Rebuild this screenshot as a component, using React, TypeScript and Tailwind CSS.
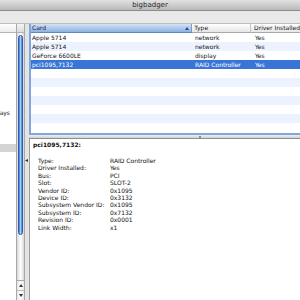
import React from 'react';

type Device = { card: string; type: string; driver: string; selected?: boolean };

const devices: Device[] = [
  { card: 'Apple 5714', type: 'network', driver: 'Yes' },
  { card: 'Apple 5714', type: 'network', driver: 'Yes' },
  { card: 'GeForce 6600LE', type: 'display', driver: 'Yes' },
  { card: 'pci1095,7132', type: 'RAID Controller', driver: 'Yes', selected: true },
];

const details: [string, string][] = [
  ['Type:', 'RAID Controller'],
  ['Driver Installed:', 'Yes'],
  ['Bus:', 'PCI'],
  ['Slot:', 'SLOT-2'],
  ['Vendor ID:', '0x1095'],
  ['Device ID:', '0x3132'],
  ['Subsystem Vendor ID:', '0x1095'],
  ['Subsystem ID:', '0x7132'],
  ['Revision ID:', '0x0001'],
  ['Link Width:', 'x1'],
];

const TOTAL_ROWS = 11;

function Row({ d, index }: { d?: Device; index: number }) {
  const stripe = index % 2 === 1 ? 'bg-[#edf3fe]' : 'bg-white';
  const bg = d?.selected ? 'bg-[#3875d7] text-white' : `${stripe} text-[#111]`;
  return (
    <div className={`flex h-[9px] leading-[9px] whitespace-nowrap ${bg}`}>
      <div className="w-[162px] pl-[1px]">{d?.card}</div>
      <div className="w-[59px] pl-[2px]">{d?.type}</div>
      <div className="flex-1 pl-[3px]">{d?.driver}</div>
    </div>
  );
}

export default function App() {
  const rows = Array.from({ length: TOTAL_ROWS }, (_, i) => devices[i]);

  return (
    <div className="w-[300px] h-[300px] overflow-hidden flex flex-col bg-[#e8e8e8] text-[6px] text-[#111] font-['DejaVu_Sans',sans-serif]">
      {/* title bar */}
      <div className="h-[11px] shrink-0 flex items-center justify-center bg-gradient-to-b from-[#e2e2e2] to-[#b9b9b9] border-b border-[#8c8c8c] text-[7px] leading-[10px] text-[#2a2a2a]">
        bigbadger
      </div>
      {/* toolbar strip */}
      <div className="h-[13px] shrink-0 bg-[#e9e9e9] border-b border-[#bdbdbd]" />

      <div className="flex-1 flex min-h-0">
        {/* source list */}
        <div className="w-[16px] shrink-0 bg-white flex flex-col">
          <div className="h-[9px] shrink-0 bg-gradient-to-b from-white to-[#ececec] border-b border-[#b5b5b5]" />
          <div className="mt-[76px] h-[8px] flex justify-end overflow-hidden pr-[6px] leading-[8px] whitespace-nowrap">
            Displays
          </div>
          <div className="mt-[27px] h-[8px] bg-[#d4d4d4]" />
        </div>

        {/* scrollbar */}
        <div className="w-[9px] shrink-0 flex flex-col bg-[#f4f4f4] border-l border-r border-[#a8a8a8]">
          <div className="h-[9px] shrink-0 bg-gradient-to-b from-[#f4f4f4] to-[#dcdcdc] border-b border-[#b5b5b5]" />
          <div className="flex-1 px-[1px] pt-[2px] pb-[44px] bg-gradient-to-r from-[#d8d8d8] via-white to-[#d8d8d8]">
            <div className="h-[200px] rounded-full bg-gradient-to-r from-[#2f6ccc] via-[#a9d0f6] to-[#3b78d4] border border-[#2a5fb4]" />
          </div>
          <div className="h-[20px] shrink-0 flex flex-col border-t border-[#a8a8a8] bg-gradient-to-r from-[#e6e6e6] via-white to-[#e6e6e6]">
            <div className="flex-1 flex items-center justify-center border-b border-[#bdbdbd]">
              <svg width="4" height="3" viewBox="0 0 4 3"><path d="M0 3 L2 0 L4 3 Z" fill="#333" /></svg>
            </div>
            <div className="flex-1 flex items-center justify-center">
              <svg width="4" height="3" viewBox="0 0 4 3"><path d="M0 0 L2 3 L4 0 Z" fill="#333" /></svg>
            </div>
          </div>
        </div>

        {/* divider */}
        <div className="w-[4px] shrink-0 bg-[#e4e4e4] flex flex-col">
          <div className="mt-[135px] flex justify-start">
            <svg width="4" height="3" viewBox="0 0 4 3"><path d="M0 1.5 L3 0 L3 3 Z" fill="#333" /></svg>
          </div>
        </div>

        {/* right side */}
        <div className="flex-1 flex flex-col min-w-0">
          {/* device table */}
          <div className="h-[111px] shrink-0 flex flex-col bg-white border-l-2 border-b-2 border-[#7fa6dd] overflow-hidden">
            <div className="h-[9px] shrink-0 flex leading-[8px] whitespace-nowrap">
              <div className="w-[162px] flex items-center justify-between pl-[1px] pr-[2px] bg-gradient-to-b from-[#d3e2f5] to-[#8fb1e0] border-b border-[#5e88c4] border-r border-r-[#7d9ccb] text-[#0c2044]">
                <span>Card</span>
                <svg width="4" height="3" viewBox="0 0 4 3"><path d="M0 3 L2 0 L4 3 Z" fill="#2c4a78" /></svg>
              </div>
              <div className="w-[59px] pl-[2px] bg-gradient-to-b from-white to-[#e6e6e6] border-b border-[#a9a9a9] border-r border-r-[#c4c4c4]">
                Type
              </div>
              <div className="flex-1 pl-[3px] bg-gradient-to-b from-white to-[#e6e6e6] border-b border-[#a9a9a9]">
                Driver Installed
              </div>
            </div>
            {rows.map((d, i) => (
              <Row key={i} d={d} index={i} />
            ))}
          </div>

          {/* splitter */}
          <div className="h-[4px] shrink-0 bg-gradient-to-b from-[#eeeeee] to-[#d2d2d2] border-b border-[#8e8e8e] flex justify-center">
            <div className="ml-[70px] mt-[1px] w-[2px] h-[2px] rounded-full bg-[#777]" />
          </div>

          {/* details */}
          <div className="flex-1 bg-white border-l border-[#9d9d9d] pl-[3px] pt-[2px] leading-[7.4px]">
            <div className="font-bold leading-[8px]">pci1095,7132:</div>
            <div className="mt-[8px] ml-[5px] grid grid-cols-[72px_1fr] whitespace-nowrap">
              {details.map(([k, v]) => (
                <React.Fragment key={k}>
                  <div>{k}</div>
                  <div>{v}</div>
                </React.Fragment>
              ))}
            </div>
          </div>
        </div>
      </div>
    </div>
  );
}
